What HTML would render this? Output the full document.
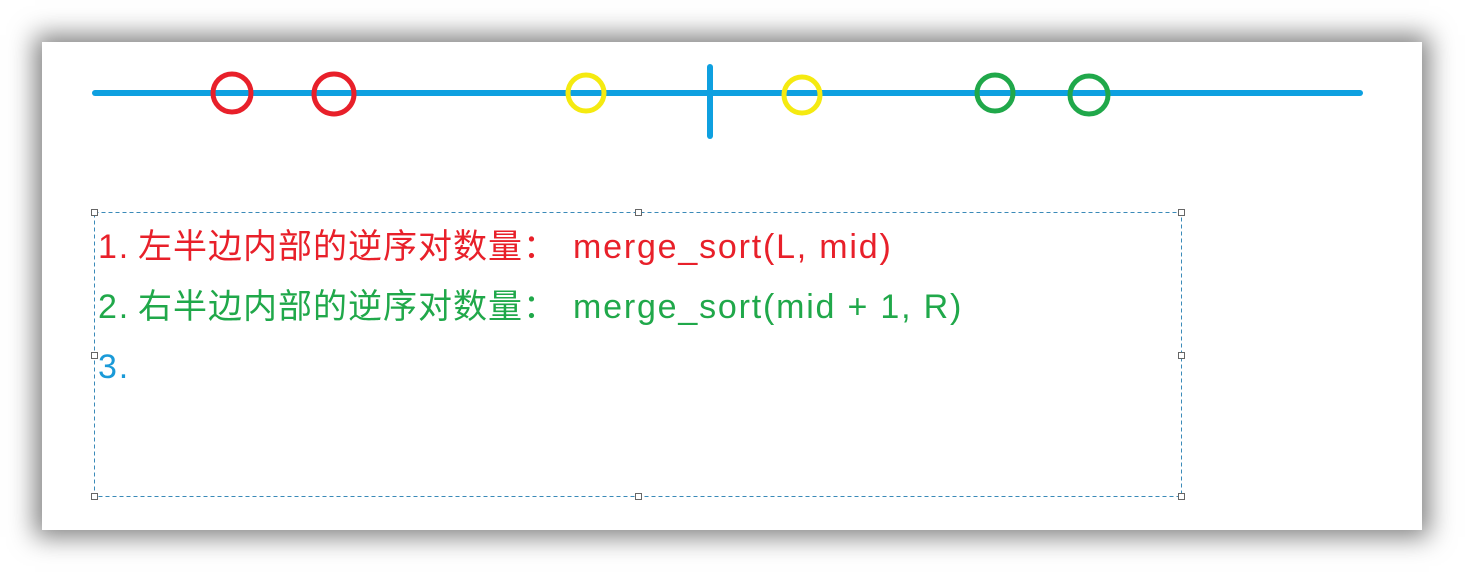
<!DOCTYPE html>
<html><head><meta charset="utf-8"><style>
body{margin:0;width:1465px;height:572px;background:#fff;position:relative;overflow:hidden}
.panel{position:absolute;left:42px;top:42px;width:1380px;height:488px;background:#fff;box-shadow:0 0 24px 7px rgba(0,0,0,0.5)}
.t{position:absolute;font-family:"Liberation Sans","Noto Sans CJK SC",sans-serif;font-size:34px;white-space:nowrap;line-height:40px}
.l{letter-spacing:1.8px}
.h{position:absolute;width:5px;height:5px;border:1px solid #666;background:#fff}
</style></head><body>
<div class="panel"></div>
<svg style="position:absolute;left:0;top:0" width="1465" height="572">
<line x1="95" y1="93" x2="1360" y2="93" stroke="#0ea0e0" stroke-width="6" stroke-linecap="round"/>
<line x1="710" y1="67" x2="710" y2="136" stroke="#0ea0e0" stroke-width="6" stroke-linecap="round"/>
<circle cx="232" cy="93" r="19" fill="none" stroke="#e8202a" stroke-width="5"/>
<circle cx="334" cy="94" r="20" fill="none" stroke="#e8202a" stroke-width="5"/>
<circle cx="586" cy="93" r="18" fill="none" stroke="#f5ea10" stroke-width="5"/>
<circle cx="802" cy="95" r="18" fill="none" stroke="#f5ea10" stroke-width="5"/>
<circle cx="995" cy="93" r="18" fill="none" stroke="#20a84a" stroke-width="5"/>
<circle cx="1089" cy="95" r="19" fill="none" stroke="#20a84a" stroke-width="5"/>
<rect x="94.5" y="212.5" width="1087" height="284" fill="none" stroke="#3a8ab8" stroke-width="1" stroke-dasharray="4,3"/>
</svg>
<div class="h" style="left:91px;top:209px"></div><div class="h" style="left:635px;top:209px"></div><div class="h" style="left:1178px;top:209px"></div>
<div class="h" style="left:91px;top:352px"></div><div class="h" style="left:1178px;top:352px"></div>
<div class="h" style="left:91px;top:493px"></div><div class="h" style="left:635px;top:493px"></div><div class="h" style="left:1178px;top:493px"></div>
<div class="t l" style="left:98px;top:227px;color:#e8202a">1.</div>
<div class="t" style="left:138px;top:227px;color:#e8202a;letter-spacing:1px">左半边内部的逆序对数量：</div>
<div class="t l" style="left:573px;top:227px;color:#e8202a">merge_sort(L, mid)</div>
<div class="t l" style="left:98px;top:287px;color:#20a84a">2.</div>
<div class="t" style="left:138px;top:287px;color:#20a84a;letter-spacing:1px">右半边内部的逆序对数量：</div>
<div class="t l" style="left:573px;top:287px;color:#20a84a">merge_sort(mid + 1, R)</div>
<div class="t l" style="left:98px;top:347px;color:#1a9ad8">3.</div>
</body></html>
